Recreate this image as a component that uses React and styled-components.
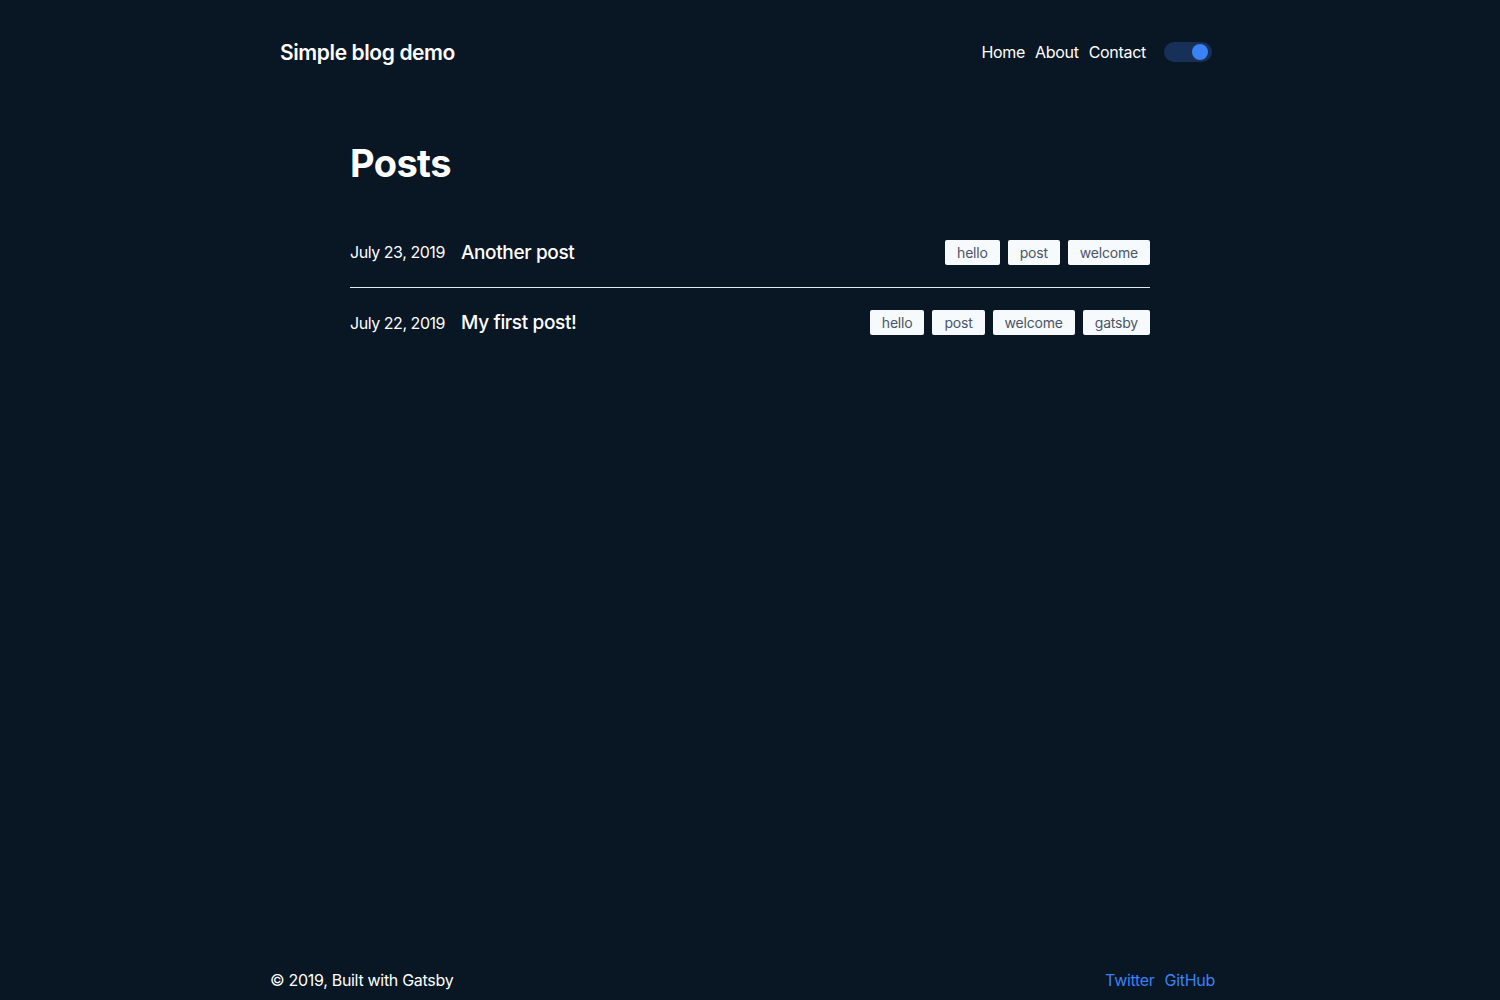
import React from "react";
import styled, { createGlobalStyle } from "styled-components";

const posts = [
  { date: "July 23, 2019", title: "Another post", tags: ["hello", "post", "welcome"] },
  { date: "July 22, 2019", title: "My first post!", tags: ["hello", "post", "welcome", "gatsby"] },
];

const GlobalStyle = createGlobalStyle`
  html, body {
    margin: 0;
    padding: 0;
    background: #091624;
    color: #ffffff;
    font-family: Inter, "Noto Sans", "Liberation Sans", sans-serif;
    -webkit-font-smoothing: antialiased;
  }
  * { box-sizing: border-box; }
`;

const App = () => {
  return (
    <Page>
      <GlobalStyle />
      <Header>
        <Brand href="#">Simple blog demo</Brand>
        <Nav>
          <NavLink href="#">Home</NavLink>
          <NavLink href="#">About</NavLink>
          <NavLink href="#">Contact</NavLink>
          <Toggle aria-label="toggle theme">
            <Knob />
          </Toggle>
        </Nav>
      </Header>
      <Main>
        <Heading>Posts</Heading>
        <List>
          {posts.map((post, key) => (
            <Row key={key} $last={key === posts.length - 1}>
              <PostInfo>
                <PostDate>{post.date}</PostDate>
                <PostTitle href="#">{post.title}</PostTitle>
              </PostInfo>
              <Tags>
                {post.tags.map((tag) => (
                  <Tag key={tag}>{tag}</Tag>
                ))}
              </Tags>
            </Row>
          ))}
        </List>
      </Main>
      <Footer>
        <span>© 2019, Built with Gatsby</span>
        <FooterLinks>
          <FooterLink href="#">Twitter</FooterLink>
          <FooterLink href="#">GitHub</FooterLink>
        </FooterLinks>
      </Footer>
    </Page>
  );
};

export default App;

const Page = styled.div`
  min-height: 100vh;
  display: flex;
  flex-direction: column;
`;

const Header = styled.header`
  width: 960px;
  margin: 0 auto;
  height: 104px;
  padding: 0 18px 0 10px;
  display: flex;
  justify-content: space-between;
  align-items: center;
`;

const Brand = styled.a`
  color: #ffffff;
  text-decoration: none;
  font-size: 21px;
  font-weight: 600;
  letter-spacing: -0.4px;
`;

const Nav = styled.nav`
  display: flex;
  align-items: center;
  gap: 10px;
`;

const NavLink = styled.a`
  color: #ffffff;
  text-decoration: none;
  font-size: 16px;
  font-weight: 400;
  letter-spacing: -0.3px;
`;

const Toggle = styled.button`
  margin-left: 8px;
  width: 48px;
  height: 20px;
  border: none;
  border-radius: 10px;
  background: #163057;
  padding: 0 4px;
  display: flex;
  align-items: center;
  justify-content: flex-end;
  cursor: pointer;
`;

const Knob = styled.span`
  width: 16px;
  height: 16px;
  border-radius: 50%;
  background: #3b82f6;
`;

const Main = styled.main`
  width: 800px;
  margin: 0 auto;
  flex: 1;
`;

const Heading = styled.h1`
  margin: 35px 0 0;
  font-size: 38px;
  line-height: 48px;
  font-weight: 700;
  letter-spacing: -0.6px;
`;

const List = styled.div`
  margin-top: 30px;
`;

const Row = styled.div`
  height: ${(p) => (p.$last ? "69px" : "71px")};
  display: flex;
  align-items: center;
  justify-content: space-between;
  border-bottom: ${(p) => (p.$last ? "none" : "1px solid #e2e8f0")};
`;

const PostInfo = styled.div`
  display: flex;
  align-items: center;
  gap: 16px;
`;

const PostDate = styled.span`
  font-size: 16px;
  font-weight: 400;
  letter-spacing: -0.45px;
`;

const PostTitle = styled.a`
  color: #ffffff;
  text-decoration: none;
  font-size: 19px;
  font-weight: 500;
  letter-spacing: -0.35px;
`;

const Tags = styled.div`
  display: flex;
  gap: 8px;
`;

const Tag = styled.span`
  background: #f7fafc;
  color: #4a5568;
  font-size: 14px;
  line-height: 25px;
  height: 25px;
  padding: 0 12px;
  border-radius: 2px;
  letter-spacing: -0.2px;
`;

const Footer = styled.footer`
  width: 960px;
  margin: 0 auto;
  height: 40px;
  padding: 0 15px 0 0;
  display: flex;
  justify-content: space-between;
  align-items: center;
  font-size: 16px;
  letter-spacing: -0.3px;
`;

const FooterLinks = styled.div`
  display: flex;
  gap: 10px;
`;

const FooterLink = styled.a`
  color: #3b82f6;
  text-decoration: none;
`;
